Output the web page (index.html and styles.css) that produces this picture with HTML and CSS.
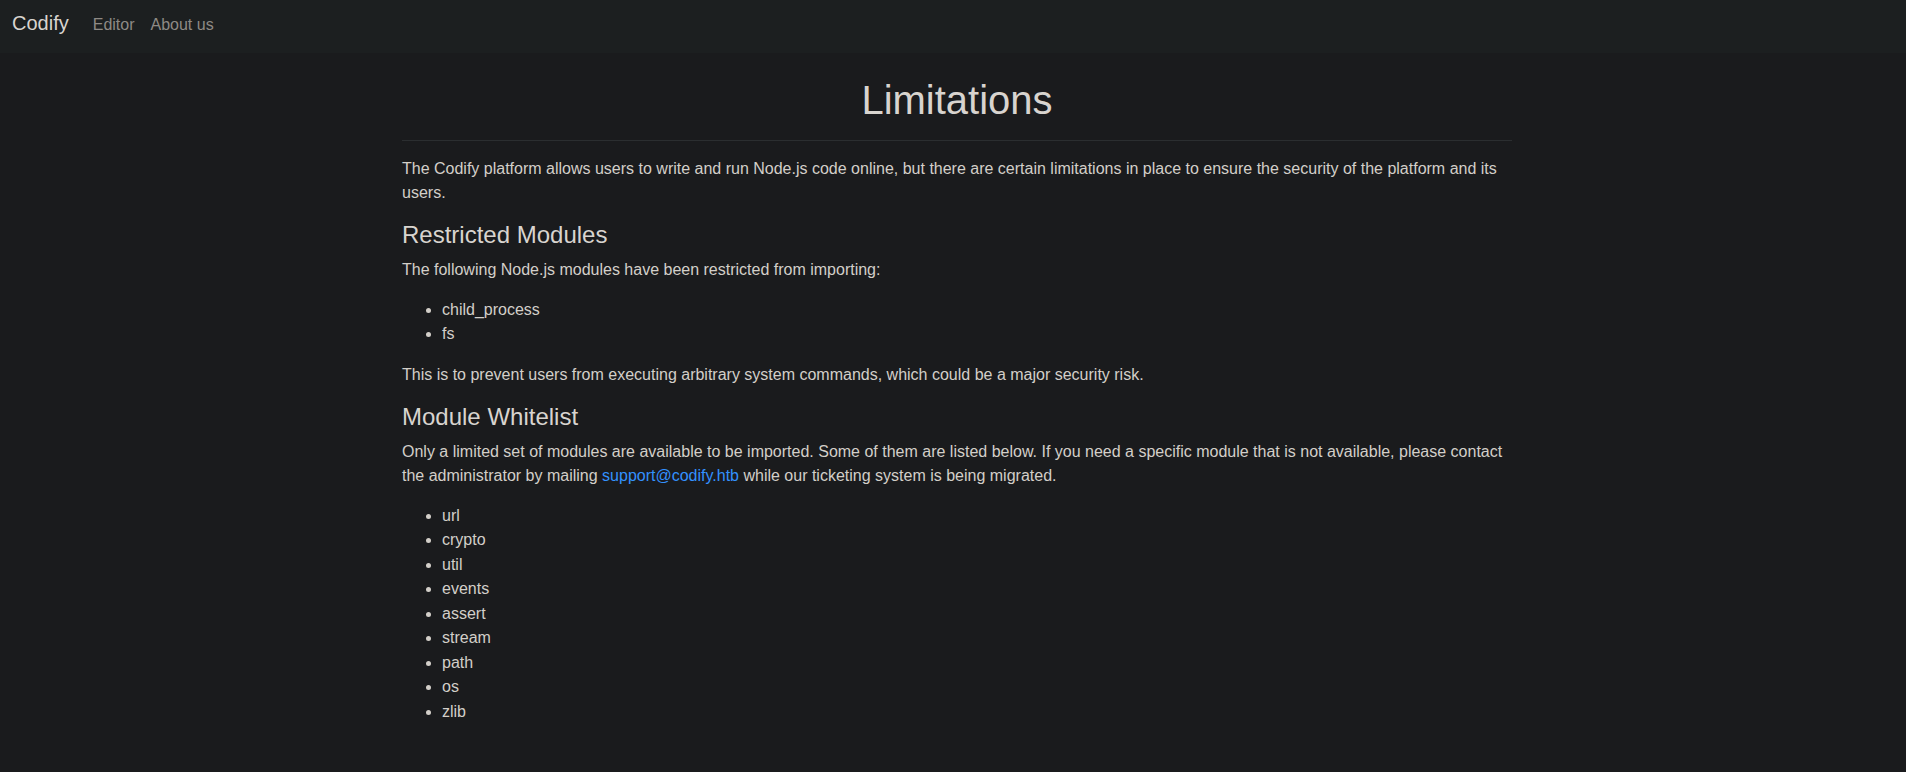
FILE: index.html
```html
<!DOCTYPE html>
<html lang="en">
<head>
<meta charset="utf-8">
<title>Codify - Limitations</title>
<link rel="stylesheet" href="styles.css">
</head>
<body>
<nav class="navbar">
  <a class="brand" href="#">Codify</a>
  <ul class="nav">
    <li><a class="nav-link" href="#">Editor</a></li>
    <li><a class="nav-link" href="#">About us</a></li>
  </ul>
</nav>
<main class="container">
  <h1 class="title">Limitations</h1>
  <hr class="rule">
  <p>The Codify platform allows users to write and run Node.js code online, but there are certain limitations in place to ensure the security of the platform and its users.</p>
  <h2 class="section">Restricted Modules</h2>
  <p>The following Node.js modules have been restricted from importing:</p>
  <ul class="list">
    <li>child_process</li>
    <li>fs</li>
  </ul>
  <p>This is to prevent users from executing arbitrary system commands, which could be a major security risk.</p>
  <h2 class="section">Module Whitelist</h2>
  <p>Only a limited set of modules are available to be imported. Some of them are listed below. If you need a specific module that is not available, please contact the administrator by mailing <a class="link" href="#">support@codify.htb</a> while our ticketing system is being migrated.</p>
  <ul class="list">
    <li>url</li>
    <li>crypto</li>
    <li>util</li>
    <li>events</li>
    <li>assert</li>
    <li>stream</li>
    <li>path</li>
    <li>os</li>
    <li>zlib</li>
  </ul>
</main>
</body>
</html>
```
FILE: styles.css
```css
html, body {
  margin: 0;
  padding: 0;
}
body {
  background: #1a1b1d;
  color: #d3cfc9;
  font-family: "Liberation Sans", Arial, sans-serif;
  font-size: 16px;
  line-height: 24px;
  min-height: 772px;
}
a {
  text-decoration: none;
}
.navbar {
  box-sizing: border-box;
  height: 53px;
  padding: 8px 12px 0;
  background: #1c1f20;
  display: flex;
  align-items: baseline;
}
.brand {
  color: #d8d4cf;
  font-size: 20px;
  line-height: 30px;
  margin-right: 16px;
}
.nav {
  display: flex;
  list-style: none;
  margin: 0;
  padding: 0;
}
.nav-link {
  display: block;
  padding: 0 8px;
  color: #8e8a85;
  line-height: 24px;
}
.container {
  width: 1110px;
  margin-left: calc(50% - 551px);
  padding-top: 23px;
}
.title {
  font-size: 40px;
  font-weight: 500;
  line-height: 1.2;
  text-align: center;
  margin: 0 0 8px;
  color: #d8d4cf;
}
.rule {
  border: 0;
  border-top: 1px solid #2b2e30;
  margin: 16px 0;
}
p {
  margin: 0 0 16px;
}
.section {
  font-size: 24px;
  font-weight: 500;
  line-height: 1.2;
  margin: 0 0 8px;
  color: #d8d4cf;
}
.list {
  margin: 0 0 16px;
  padding-left: 40px;
}
.list li {
  line-height: 24.5px;
}
.link {
  color: #3391ff;
}
```
